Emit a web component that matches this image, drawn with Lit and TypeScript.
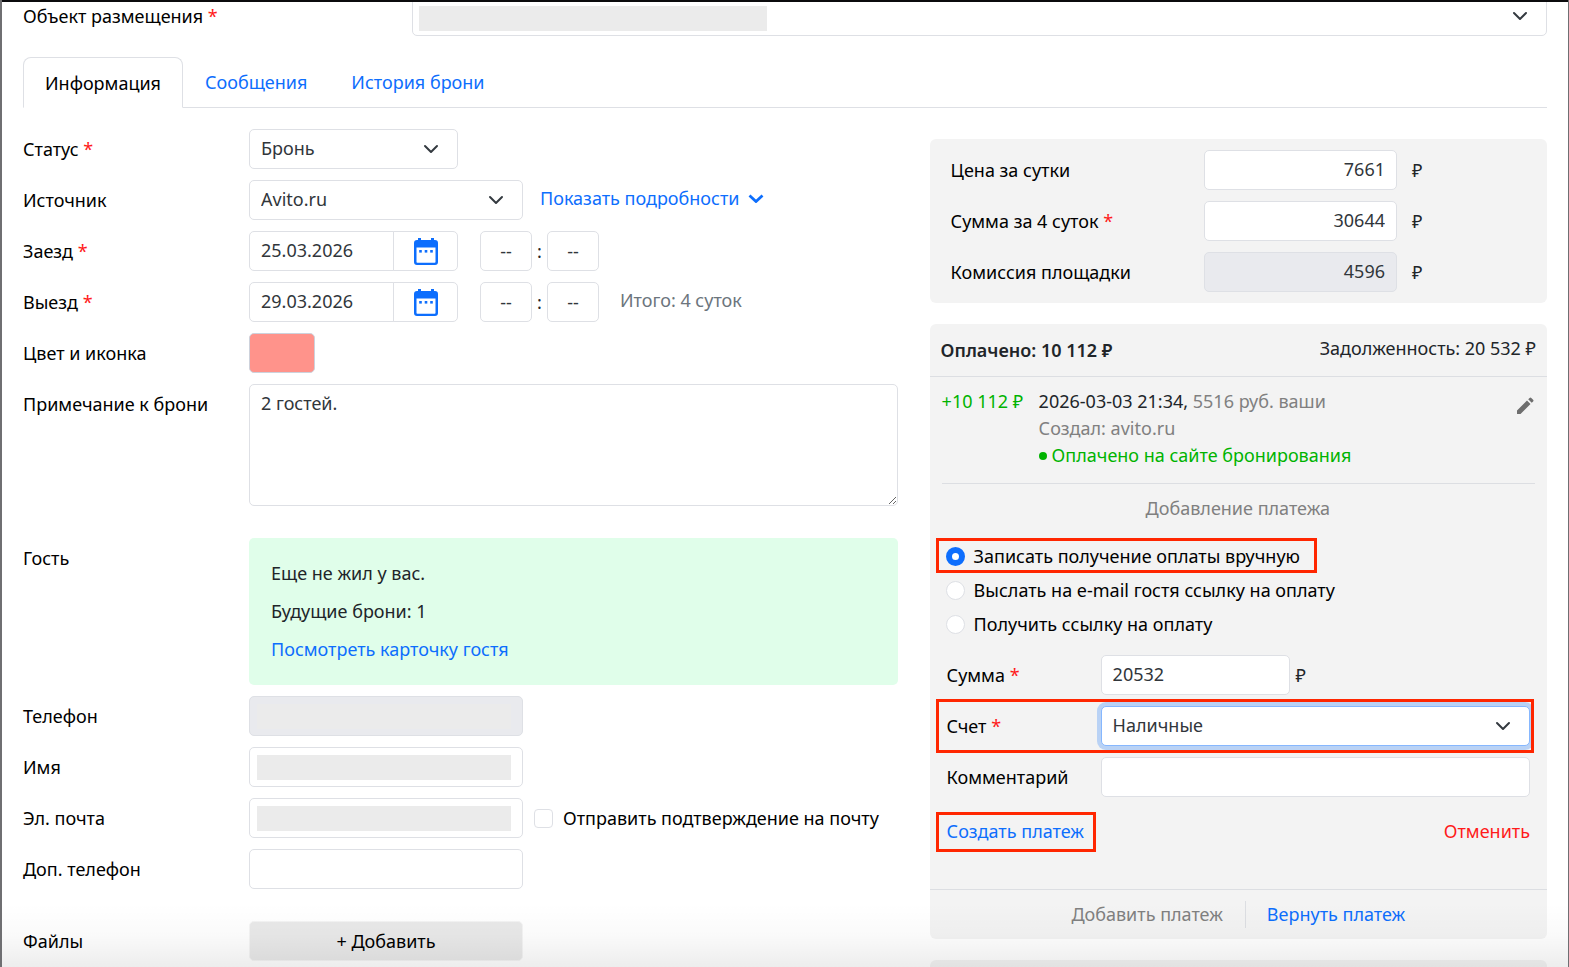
import { LitElement, html, css, svg, nothing } from "lit";
import { customElement, state } from "lit/decorators.js";

const chevron = html`<svg class="chevron" viewBox="0 0 16 16" aria-hidden="true">
  <path d="m2 5 6 6 6-6" fill="none" stroke="#343a40" stroke-width="2" stroke-linecap="round" stroke-linejoin="round" />
</svg>`;

const calendar = html`<svg class="calendar" viewBox="0 0 24 27" aria-hidden="true">
  <path
    fill="#0d6efd"
    fill-rule="evenodd"
    d="M4 0h3v2h10V0h3v2h1a3 3 0 0 1 3 3v19a3 3 0 0 1-3 3H3a3 3 0 0 1-3-3V5a3 3 0 0 1 3-3h1zM2.500 9.500v14.500a.8.8 0 0 0 .8.800h17.400a.8.8 0 0 0 .8-.800V9.500z"
  />
  ${[5.2, 10.7, 16.2].map((x) => svg`<rect x=${x} y="12" width="2.600" height="2.600" fill="#0d6efd" />`)}
</svg>`;

const required = html`<span class="required">*</span>`;

const paymentModes = [
  { id: "manual", label: "Записать получение оплаты вручную" },
  { id: "email", label: "Выслать на e-mail гостя ссылку на оплату" },
  { id: "link", label: "Получить ссылку на оплату" },
];

@customElement("app-root")
export class AppRoot extends LitElement {
  @state() private mode = "manual";

  static styles = css`
    :host {
      display: block;
      font-family: "Noto Sans", "Open Sans", sans-serif;
      font-size: 18px;
      line-height: 27px;
      color: #212529;
    }
    *,
    *::before,
    *::after {
      box-sizing: border-box;
    }
    .page {
      position: relative;
      height: 100vh;
      overflow: hidden;
      padding: 0 21px;
      background: #fff;
      border: solid #6f6f72;
      border-width: 0 1px 0 2px;
    }
    .page::before {
      content: "";
      position: absolute;
      inset: 0 0 auto -2px;
      height: 2px;
      background: #0b0b0d;
      z-index: 2;
    }
    .fade {
      position: absolute;
      inset: auto 0 0 0;
      height: 64px;
      background: linear-gradient(rgba(0, 0, 0, 0), rgba(0, 0, 0, 0.02) 50%, rgba(0, 0, 0, 0.07));
      pointer-events: none;
    }
    label,
    .label {
      color: #000;
      line-height: 40px;
      white-space: nowrap;
    }
    .required {
      color: #ff1a1a;
    }
    a,
    .link {
      color: #0d6efd;
      text-decoration: none;
    }
    button,
    input,
    select,
    textarea {
      font: inherit;
      color: #31363b;
      margin: 0;
    }
    button {
      background: none;
      border: 0;
      padding: 0;
      cursor: pointer;
    }
    .control {
      display: block;
      width: 100%;
      height: 40px;
      padding: 0 11px 2px;
      border: 1px solid #dee0e5;
      border-radius: 5px;
      background: #fff;
      appearance: none;
      outline: 0;
    }
    .control:disabled {
      background: #e9eaee;
      opacity: 1;
    }
    .select {
      position: relative;
    }
    .chevron {
      position: absolute;
      right: 19px;
      top: 12px;
      width: 16px;
      height: 16px;
      pointer-events: none;
    }
    .masked {
      position: relative;
    }
    .masked::after {
      content: "";
      position: absolute;
      inset: 8px 12px 7px 8px;
      background: #ebebeb;
      pointer-events: none;
    }
    .object {
      display: grid;
      grid-template-columns: 389px 1fr;
      margin-top: -4px;
    }
    .object .masked::after {
      inset: 10px auto 5px 7px;
      width: 348px;
    }
    .tabs {
      display: flex;
      margin-top: 21px;
      border-bottom: 1px solid #dee0e5;
    }
    .tab {
      height: 50px;
      line-height: 50px;
      padding: 0 22px;
    }
    .tab.active {
      color: #000;
      height: 51px;
      margin-bottom: -1px;
      padding: 0 21px;
      border: 1px solid #dee0e5;
      border-bottom-color: #fff;
      border-radius: 8px 8px 0 0;
      background: #fff;
    }
    .columns {
      display: grid;
      grid-template-columns: minmax(0, 17fr) minmax(0, 12fr);
      gap: 32px;
      margin-top: 21px;
    }
    .form {
      display: grid;
      grid-template-columns: 226px minmax(0, 1fr);
      row-gap: 11px;
      align-content: start;
    }
    .line {
      display: flex;
      align-items: center;
    }
    .w-status {
      width: 209px;
    }
    .w-field {
      width: 274px;
    }
    .details {
      display: flex;
      align-items: center;
      gap: 9px;
      margin-left: 17px;
      padding-bottom: 4px;
    }
    .details svg {
      width: 16px;
      height: 10px;
    }
    .date {
      display: flex;
      width: 209px;
      margin-right: 22px;
    }
    .date .control {
      flex: 1;
      min-width: 0;
      border-radius: 5px 0 0 5px;
    }
    .date button {
      display: grid;
      place-items: center;
      width: 65px;
      margin-left: -1px;
      border: 1px solid #dee0e5;
      border-radius: 0 5px 5px 0;
    }
    .calendar {
      width: 24px;
      height: 27px;
    }
    .time {
      width: 52px;
      padding: 0;
      text-align: center;
      text-align-last: center;
    }
    .colon {
      width: 15px;
      text-align: center;
    }
    .total {
      margin-left: 21px;
      padding-bottom: 3px;
      color: #6c757d;
    }
    .swatch {
      width: 66px;
      height: 40px;
      border: 1px solid #cdd2dc;
      border-radius: 5px;
      background: #ff938b;
    }
    .note {
      height: 122px;
      padding: 5px 11px;
      resize: vertical;
    }
    .spaced {
      margin-top: 21px;
    }
    .guest {
      padding: 22px 22px 11px;
      border-radius: 5px;
      background: #e0feea;
    }
    .guest p {
      margin: 0;
      padding-bottom: 11px;
    }
    .check {
      display: flex;
      align-items: center;
      gap: 10px;
      margin-left: 11px;
    }
    .box {
      appearance: none;
      flex: none;
      width: 19px;
      height: 19px;
      border: 1px solid #dee0e5;
      border-radius: 4px;
      background: #fff;
    }
    .add {
      width: 274px;
      height: 40px;
      border: 1px solid #f4f4f4;
      border-radius: 5px;
      background: #e9e9e9;
      color: #000;
    }
    .side {
      display: grid;
      gap: 21px;
      align-content: start;
      padding-top: 10px;
    }
    .card {
      border-radius: 6px;
      background: #f3f3f3;
    }
    .prices {
      display: grid;
      grid-template-columns: minmax(0, 1fr) 193px 134px;
      row-gap: 11px;
      padding: 11px 16px 11px 21px;
    }
    .prices .control {
      text-align: right;
    }
    .currency {
      line-height: 40px;
      padding-left: 15px;
    }
    .summary {
      display: flex;
      justify-content: space-between;
      height: 53px;
      padding: 11px 11px 0;
      border-bottom: 1px solid #dcdee2;
    }
    .summary b {
      font-weight: 600;
      padding-top: 2px;
    }
    .entry {
      display: grid;
      grid-template-columns: 97px 1fr 20px;
      margin: 0 12px;
      padding: 11px 0 14px;
      border-bottom: 1px solid #dcdee2;
      white-space: nowrap;
    }
    .green {
      color: #00b300;
    }
    .muted {
      color: #808080;
    }
    .dot {
      display: inline-block;
      width: 8px;
      height: 8px;
      margin-right: 5px;
      border-radius: 50%;
      background: #00b300;
      vertical-align: 2px;
    }
    .edit {
      align-self: start;
      height: 30px;
      justify-self: end;
    }
    .edit svg {
      display: block;
      width: 20px;
      height: 22px;
    }
    .payment {
      padding: 11px 17px 37px 16px;
    }
    .payment h2 {
      margin: 0 0 17px;
      font-size: inherit;
      font-weight: 400;
      text-align: center;
    }
    .mode {
      position: relative;
      display: flex;
      align-items: center;
      gap: 9px;
      width: fit-content;
      height: 34px;
    }
    .mode label {
      line-height: 34px;
    }
    .radio {
      appearance: none;
      flex: none;
      width: 19px;
      height: 19px;
      margin: 0;
      border: 1px solid #dee0e5;
      border-radius: 50%;
      background: #fff;
    }
    .radio:checked {
      border: 6px solid #0d6efd;
    }
    .marked {
      position: relative;
    }
    .marked::after {
      content: "";
      position: absolute;
      inset: -7px -4px -7px -10px;
      border: 3px solid #ff2600;
      pointer-events: none;
    }
    .mode.marked::after {
      inset: -1px -17px 0 -10px;
    }
    .action.marked::after {
      inset: 0 -12px 0 -11px;
    }
    .fields {
      display: grid;
      gap: 11px;
      margin-top: 14px;
    }
    .field {
      display: grid;
      grid-template-columns: 154px minmax(0, 1fr);
      padding-left: 1px;
    }
    .sum {
      width: 189px;
    }
    .sum + .currency {
      padding-left: 6px;
    }
    .focused {
      border-color: #86b7fe;
      box-shadow: 0 0 0 4px rgba(13, 110, 253, 0.25);
    }
    .actions {
      display: flex;
      justify-content: space-between;
      margin-top: 15px;
      padding-left: 1px;
    }
    .action {
      height: 40px;
      padding-bottom: 2px;
    }
    .link {
      color: #0d6efd;
    }
    .cancel {
      color: #ff1a1a;
    }
    .footer {
      display: flex;
      justify-content: center;
      align-items: center;
      height: 50px;
      border-top: 1px solid #dcdee2;
    }
    .footer button + button {
      margin-left: 22px;
      padding-left: 21px;
      border-left: 1px solid #dcdee2;
    }
    .next {
      height: 80px;
    }
  `;

  private dateRow(id: string, label: string, value: string, total?: string) {
    return html`
      <label for=${id}>${label} ${required}</label>
      <div class="line">
        <div class="date">
          <input class="control" id=${id} .value=${value} />
          <button type="button" aria-label="Открыть календарь">${calendar}</button>
        </div>
        <select class="control time" aria-label="Часы"><option>--</option></select>
        <span class="colon">:</span>
        <select class="control time" aria-label="Минуты"><option>--</option></select>
        ${total ? html`<span class="total">${total}</span>` : nothing}
      </div>
    `;
  }

  private priceRow(id: string, label: unknown, value: string, disabled = false) {
    return html`
      <label for=${id}>${label}</label>
      <input class="control" id=${id} .value=${value} ?disabled=${disabled} />
      <span class="currency">₽</span>
    `;
  }

  private renderBooking() {
    return html`<form class="form">
      <label for="status">Статус ${required}</label>
      <div class="select w-status">
        <select class="control" id="status"><option>Бронь</option></select>${chevron}
      </div>

      <label for="source">Источник</label>
      <div class="line">
        <div class="select w-field">
          <select class="control" id="source"><option>Avito.ru</option></select>${chevron}
        </div>
        <a class="details" href="#details">Показать подробности
          <svg viewBox="0 0 16 10" aria-hidden="true">
            <path d="m1.500 2.500 6.500 6 6.500-6" fill="none" stroke="#0d6efd" stroke-width="2.800" />
          </svg>
        </a>
      </div>

      ${this.dateRow("arrival", "Заезд", "25.03.2026")}
      ${this.dateRow("departure", "Выезд", "29.03.2026", "Итого: 4 суток")}

      <label for="color">Цвет и иконка</label>
      <div class="line"><button class="swatch" id="color" type="button"></button></div>

      <label for="note">Примечание к брони</label>
      <textarea class="control note" id="note" .value=${"2 гостей."}></textarea>

      <span class="label spaced">Гость</span>
      <div class="guest spaced">
        <p>Еще не жил у вас.</p>
        <p>Будущие брони: 1</p>
        <p><a href="#guest">Посмотреть карточку гостя</a></p>
      </div>

      <label for="phone">Телефон</label>
      <div class="masked w-field"><input class="control" id="phone" type="tel" disabled /></div>

      <label for="name">Имя</label>
      <div class="masked w-field"><input class="control" id="name" /></div>

      <label for="email">Эл. почта</label>
      <div class="line">
        <div class="masked w-field"><input class="control" id="email" type="email" /></div>
        <div class="check">
          <input class="box" id="confirm" type="checkbox" />
          <label for="confirm">Отправить подтверждение на почту</label>
        </div>
      </div>

      <label for="phone2">Доп. телефон</label>
      <div class="w-field"><input class="control" id="phone2" type="tel" /></div>

      <span class="label spaced">Файлы</span>
      <div class="spaced"><button class="add" type="button">+ Добавить</button></div>
    </form>`;
  }

  private renderPayments() {
    return html`<section class="card">
      <div class="summary">
        <b>Оплачено: 10 112 ₽</b>
        <span>Задолженность: 20 532 ₽</span>
      </div>
      <div class="entry">
        <span class="green">+10 112 ₽</span>
        <div>
          <div>2026-03-03 21:34, <span class="muted">5516 руб. ваши</span></div>
          <div class="muted">Создал: avito.ru</div>
          <div class="green"><span class="dot"></span>Оплачено на сайте бронирования</div>
        </div>
        <button class="edit" type="button" aria-label="Изменить платеж">
          <svg viewBox="0 0 20 22" aria-hidden="true">
            <path fill="#6e6e6e" d="M2 22V18.500L12 8.500l3.500 3.500L5.500 22zM13.200 7.300l1.400-1.400a1.200 1.200 0 0 1 1.700 0l1.800 1.800a1.200 1.200 0 0 1 0 1.700l-1.400 1.400z" />
          </svg>
        </button>
      </div>
      <form class="payment">
        <h2 class="muted">Добавление платежа</h2>
        ${paymentModes.map(
          (m, i) => html`<div class="mode ${i === 0 ? "marked" : ""}">
            <input
              class="radio"
              type="radio"
              name="mode"
              id=${m.id}
              .checked=${this.mode === m.id}
              @change=${() => (this.mode = m.id)}
            />
            <label for=${m.id}>${m.label}</label>
          </div>`
        )}
        <div class="fields">
          <div class="field">
            <label for="sum">Сумма ${required}</label>
            <div class="line">
              <input class="control sum" id="sum" .value=${"20532"} /><span class="currency">₽</span>
            </div>
          </div>
          <div class="field marked">
            <label for="account">Счет ${required}</label>
            <div class="select">
              <select class="control focused" id="account"><option>Наличные</option></select>${chevron}
            </div>
          </div>
          <div class="field">
            <label for="comment">Комментарий</label>
            <input class="control" id="comment" />
          </div>
        </div>
        <div class="actions">
          <button class="action link marked" type="button">Создать платеж</button>
          <button class="action cancel" type="button">Отменить</button>
        </div>
      </form>
      <div class="footer">
        <button class="muted" type="button">Добавить платеж</button>
        <button class="link" type="button">Вернуть платеж</button>
      </div>
    </section>`;
  }

  render() {
    return html`<main class="page">
      <div class="object">
        <label for="object">Объект размещения ${required}</label>
        <div class="select masked">
          <select class="control" id="object"><option></option></select>${chevron}
        </div>
      </div>
      <nav class="tabs">
        <a class="tab active" href="#info">Информация</a>
        <a class="tab" href="#messages">Сообщения</a>
        <a class="tab" href="#history">История брони</a>
      </nav>
      <div class="columns">
        ${this.renderBooking()}
        <div class="side">
          <section class="card prices">
            ${this.priceRow("price", "Цена за сутки", "7661")}
            ${this.priceRow("amount", html`Сумма за 4 суток ${required}`, "30644")}
            ${this.priceRow("fee", "Комиссия площадки", "4596", true)}
          </section>
          ${this.renderPayments()}
          <section class="card next"></section>
        </div>
      </div>
      <div class="fade"></div>
    </main>`;
  }
}
